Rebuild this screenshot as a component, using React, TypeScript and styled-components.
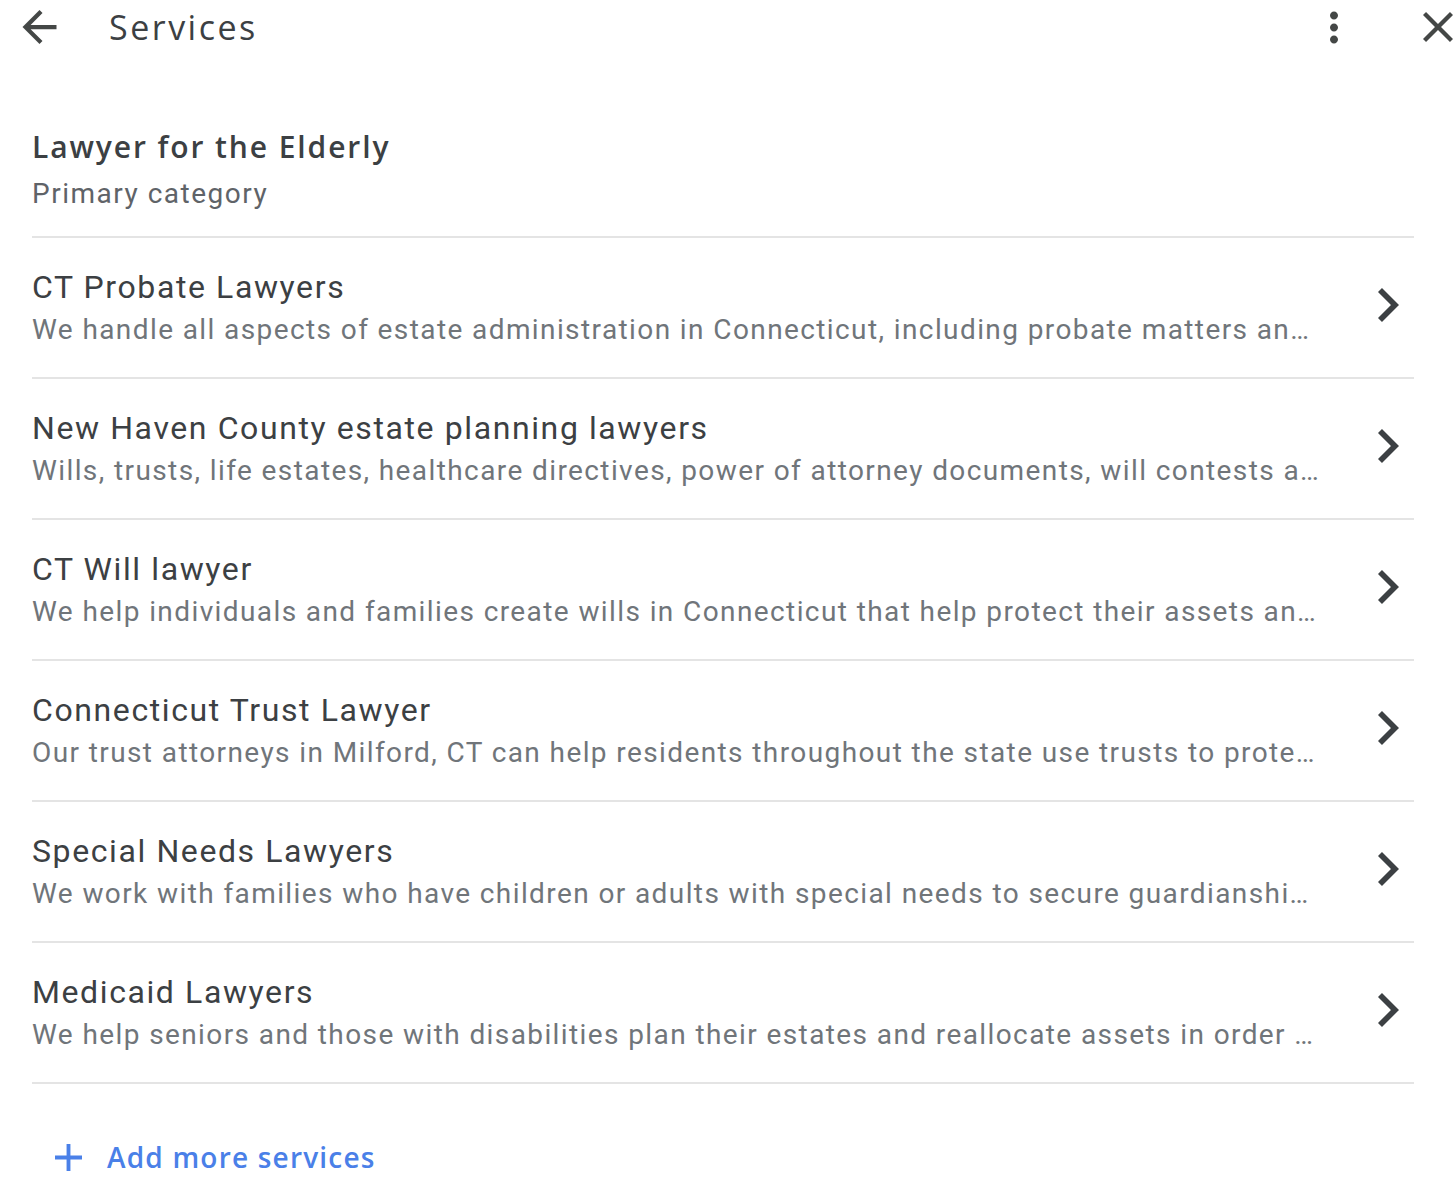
import React from 'react';
import styled, { createGlobalStyle } from 'styled-components';

const GlobalStyle = createGlobalStyle`
  html, body {
    margin: 0;
    padding: 0;
    background: #ffffff;
  }

  body {
    font-family: Roboto, "Liberation Sans", Arial, sans-serif;
    -webkit-font-smoothing: antialiased;
  }
`;

interface Service {
  title: string;
  description: string;
}

const services: Service[] = [
  {
    title: 'CT Probate Lawyers',
    description: 'We handle all aspects of estate administration in Connecticut, including probate matters an…',
  },
  {
    title: 'New Haven County estate planning lawyers',
    description: 'Wills, trusts, life estates, healthcare directives, power of attorney documents, will contests a…',
  },
  {
    title: 'CT Will lawyer',
    description: 'We help individuals and families create wills in Connecticut that help protect their assets an…',
  },
  {
    title: 'Connecticut Trust Lawyer',
    description: 'Our trust attorneys in Milford, CT can help residents throughout the state use trusts to prote…',
  },
  {
    title: 'Special Needs Lawyers',
    description: 'We work with families who have children or adults with special needs to secure guardianshi…',
  },
  {
    title: 'Medicaid Lawyers',
    description: 'We help seniors and those with disabilities plan their estates and reallocate assets in order …',
  },
];

// Top bar
const Header = styled.header`
  display: flex;
  align-items: center;
  height: 54px;
  padding: 0 1px 0 22px;
`;

const IconButton = styled.button<{ $gap?: number }>`
  display: flex;
  align-items: center;
  justify-content: center;
  padding: 0;
  margin: 0;
  border: none;
  background: none;
  color: #444746;
  cursor: pointer;
  margin-left: ${props => (props.$gap ? `${props.$gap}px` : '0')};
`;

const HeaderTitle = styled.h1`
  margin: 0 0 0 52px;
  font-family: "Open Sans", "Noto Sans", sans-serif;
  font-size: 34px;
  font-weight: 400;
  color: #3c4043;
  letter-spacing: 2.5px;
  flex: 1;
`;

// Content column
const Content = styled.main`
  padding: 0 40px 0 32px;
`;

const PrimarySection = styled.section`
  padding: 73px 0 22px;
  border-bottom: 2px solid #e4e4e4;
`;

const PrimaryName = styled.h2`
  margin: 0 0 7px;
  font-family: "Open Sans", "Noto Sans", sans-serif;
  font-size: 30px;
  line-height: 40px;
  font-weight: 600;
  letter-spacing: 1.9px;
  color: #3c4043;
`;

const PrimaryLabel = styled.div`
  font-size: 28px;
  line-height: 40px;
  letter-spacing: 1.5px;
  color: #5f6368;
`;

const ServiceList = styled.ul`
  list-style: none;
  margin: 0;
  padding: 0;
`;

const ServiceRow = styled.li`
  display: flex;
  align-items: center;
  gap: 56px;
  padding: 29px 15px 27px 0;
  border-bottom: 2px solid #e4e4e4;
  cursor: pointer;
`;

const ServiceText = styled.div`
  flex: 1;
  min-width: 0;
`;

const ServiceTitle = styled.div`
  font-size: 32px;
  line-height: 40px;
  letter-spacing: 1.6px;
  color: #3c4043;
  white-space: nowrap;
`;

const ServiceDescription = styled.div`
  margin-top: 3px;
  font-size: 28px;
  line-height: 40px;
  letter-spacing: 1.4px;
  color: #70757a;
  white-space: nowrap;
  overflow: hidden;
  text-overflow: ellipsis;
`;

const Chevron = styled.svg`
  flex-shrink: 0;
  margin-bottom: 7px;
  color: #3c4043;
`;

const AddButton = styled.button`
  display: flex;
  align-items: center;
  gap: 25px;
  margin: 54px 0 0 23px;
  padding: 0;
  border: none;
  background: none;
  cursor: pointer;
  color: #4a80e8;
  font-family: "Open Sans", "Noto Sans", sans-serif;
  font-size: 28px;
  font-weight: 600;
  letter-spacing: 1.2px;
`;

export default function App() {
  return (
    <>
      <GlobalStyle />
      <Header>
        <IconButton aria-label="Back">
          <svg width="35" height="34" viewBox="4 4 16 16" fill="currentColor">
            <path d="M20 11H7.83l5.59-5.59L12 4l-8 8 8 8 1.41-1.41L7.83 13H20v-2z" />
          </svg>
        </IconButton>
        <HeaderTitle>Services</HeaderTitle>
        <IconButton aria-label="More options">
          <svg width="8" height="33" viewBox="10 4 4 16" fill="currentColor">
            <path d="M12 8c1.1 0 2-.9 2-2s-.9-2-2-2-2 .9-2 2 .9 2 2 2zm0 2c-1.1 0-2 .9-2 2s.9 2 2 2 2-.9 2-2-.9-2-2-2zm0 6c-1.1 0-2 .9-2 2s.9 2 2 2 2-.9 2-2-.9-2-2-2z" />
          </svg>
        </IconButton>
        <IconButton aria-label="Close" $gap={85}>
          <svg width="30" height="30" viewBox="5 5 14 14" fill="currentColor">
            <path d="M19 6.41L17.59 5 12 10.59 6.41 5 5 6.41 10.59 12 5 17.59 6.41 19 12 13.41 17.59 19 19 17.59 13.41 12z" />
          </svg>
        </IconButton>
      </Header>

      <Content>
        <PrimarySection>
          <PrimaryName>Lawyer for the Elderly</PrimaryName>
          <PrimaryLabel>Primary category</PrimaryLabel>
        </PrimarySection>

        <ServiceList>
          {services.map(service => (
            <ServiceRow key={service.title}>
              <ServiceText>
                <ServiceTitle>{service.title}</ServiceTitle>
                <ServiceDescription>{service.description}</ServiceDescription>
              </ServiceText>
              <Chevron width="21" height="34" viewBox="8.59 6 7.41 12" fill="currentColor" preserveAspectRatio="none">
                <path d="M10 6L8.59 7.41 13.17 12l-4.58 4.59L10 18l6-6z" />
              </Chevron>
            </ServiceRow>
          ))}
        </ServiceList>

        <AddButton>
          <svg width="27" height="27" viewBox="5 5 14 14" fill="currentColor">
            <path d="M19 13h-6v6h-2v-6H5v-2h6V5h2v6h6v2z" />
          </svg>
          Add more services
        </AddButton>
      </Content>
    </>
  );
}
